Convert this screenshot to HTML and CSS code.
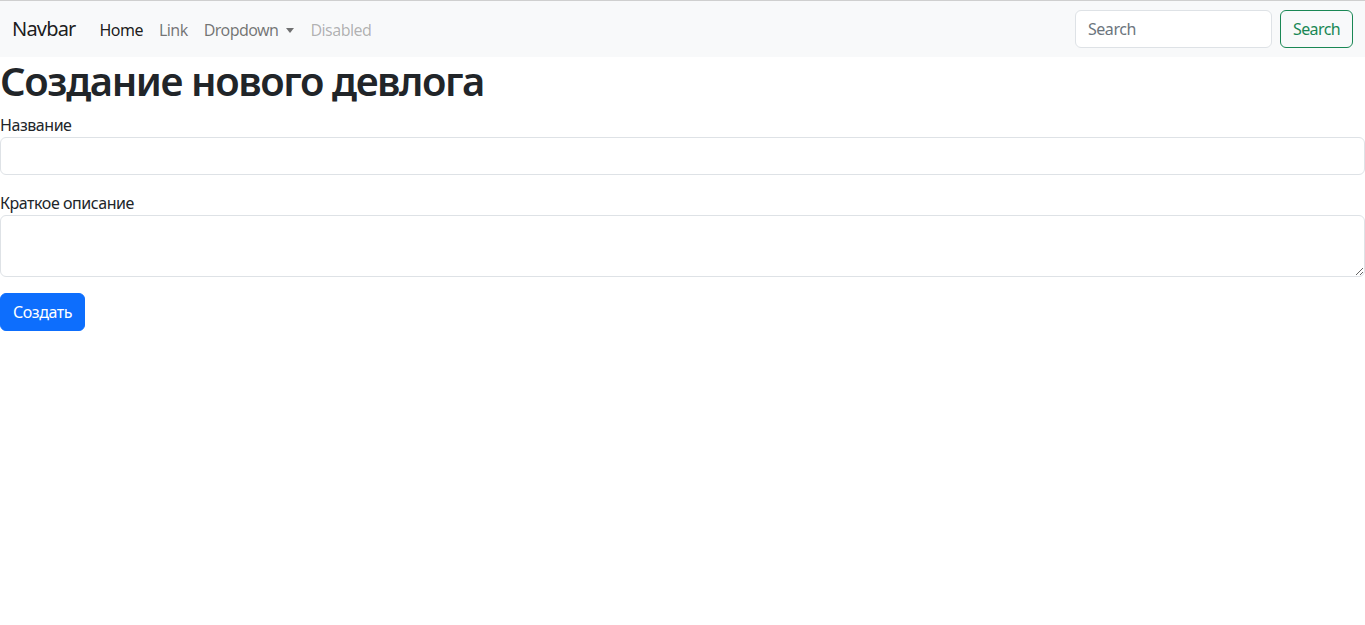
FILE: index.html
```html
<!DOCTYPE html>
<html lang="ru">
<head>
<meta charset="utf-8">
<title>Создание нового девлога</title>
<link rel="stylesheet" href="styles.css">
</head>
<body>
<nav class="navbar">
  <div class="nav-inner">
    <a class="brand" href="#">Navbar</a>
    <ul class="nav-links">
      <li><a class="nav-link active" href="#">Home</a></li>
      <li><a class="nav-link" href="#">Link</a></li>
      <li><a class="nav-link dropdown" href="#">Dropdown<span class="caret"></span></a></li>
      <li><a class="nav-link disabled" href="#">Disabled</a></li>
    </ul>
    <form class="search">
      <input class="search-input" type="search" placeholder="Search">
      <button class="btn btn-outline" type="button">Search</button>
    </form>
  </div>
</nav>
<main>
  <h1 class="title">Создание нового девлога</h1>
  <form class="devlog-form">
    <div class="field">
      <label class="label" for="name">Название</label>
      <input class="control" id="name" type="text">
    </div>
    <div class="field">
      <label class="label" for="desc">Краткое описание</label>
      <textarea class="control textarea" id="desc" rows="2"></textarea>
    </div>
    <button class="btn btn-primary" type="button">Создать</button>
  </form>
</main>
</body>
</html>
```
FILE: styles.css
```css
* { box-sizing: border-box; }
html, body { margin: 0; padding: 0; }
body {
  font-family: "Noto Sans", "Open Sans", "Liberation Sans", sans-serif;
  font-size: 16px;
  line-height: 1.5;
  letter-spacing: -0.45px;
  color: #212529;
  background: #fff;
  border-top: 1px solid #cfcfcf;
}
a { text-decoration: none; }
.navbar {
  background: #f8f9fa;
  padding: 8px 0;
}
.nav-inner {
  display: flex;
  align-items: center;
  padding: 0 12px;
}
.brand {
  font-size: 20px;
  line-height: 30px;
  letter-spacing: -0.8px;
  color: rgba(0,0,0,.9);
  margin-right: 16px;
  padding: 5px 0;
}
.nav-links {
  display: flex;
  list-style: none;
  margin: 0;
  padding: 0;
  flex: 1;
  letter-spacing: -0.55px;
}
.nav-link {
  display: flex;
  align-items: center;
  padding: 9px 8px 7px;
  color: rgba(0,0,0,.55);
}
.nav-link.active { color: rgba(0,0,0,.9); }
.nav-link.disabled { color: rgba(0,0,0,.3); }
.caret {
  display: inline-block;
  margin-left: 8px;
  width: 0; height: 0;
  border-top: 5px solid currentColor;
  border-left: 4.5px solid transparent;
  border-right: 4.5px solid transparent;
}
.search { display: flex; gap: 8px; }
.search-input {
  width: 197px;
  height: 38px;
  padding: 6px 12px;
  font: inherit;
  letter-spacing: inherit;
  color: #212529;
  border: 1px solid #dee2e6;
  border-radius: 6px;
  background: #fff;
}
.search-input::placeholder { color: #6c757d; }
.btn {
  font: inherit;
  letter-spacing: inherit;
  line-height: 24px;
  padding: 6px 12px;
  border-radius: 6px;
  border: 1px solid transparent;
  cursor: pointer;
}
.btn-outline {
  color: #198754;
  border-color: #198754;
  background: transparent;
  letter-spacing: -0.6px;
}
.btn-primary {
  color: #fff;
  background: #0d6efd;
  border-color: #0d6efd;
}
main { padding: 0; }
.title {
  margin: 0 0 8px;
  font-size: 40px;
  font-weight: 600;
  line-height: 48px;
  letter-spacing: -1.4px;
}
.devlog-form { margin: 0; }
.field { margin-bottom: 16px; }
.label { display: inline-block; }
.control {
  display: block;
  width: 100%;
  padding: 6px 12px;
  font: inherit;
  line-height: 24px;
  color: #212529;
  background: #fff;
  border: 1px solid #dee2e6;
  border-radius: 6px;
}
.textarea { height: 62px; resize: vertical; }
```
